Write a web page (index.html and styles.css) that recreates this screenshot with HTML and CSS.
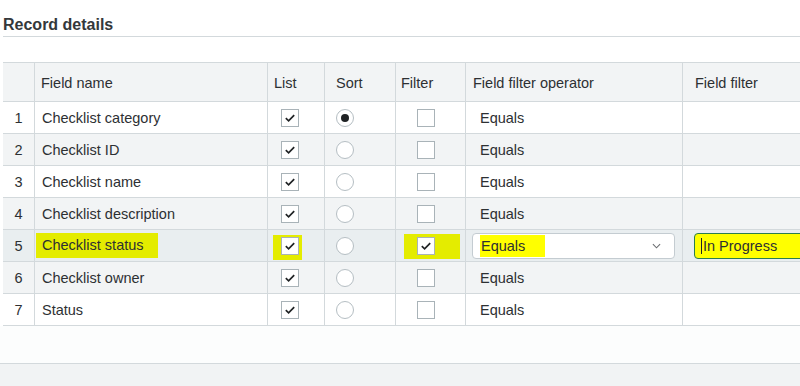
FILE: index.html
```html
<!DOCTYPE html>
<html lang="en">
<head>
    <meta charset="UTF-8">
    <meta name="viewport" content="width=device-width, initial-scale=1.0">
    <title>Record details</title>
    <link rel="stylesheet" href="styles.css">
</head>
<body>
    <div class="page">
        <h2 class="section-title">Record details</h2>

        <div class="table-wrap">
        <table class="fields">
            <colgroup>
                <col class="w-num">
                <col class="w-name">
                <col class="w-list">
                <col class="w-sort">
                <col class="w-filter">
                <col class="w-op">
                <col class="w-value">
            </colgroup>
            <thead>
                <tr>
                    <th></th>
                    <th class="h-name">Field name</th>
                    <th class="h-list">List</th>
                    <th class="h-sort">Sort</th>
                    <th class="h-filter">Filter</th>
                    <th class="h-op">Field filter operator</th>
                    <th class="h-value">Field filter</th>
                </tr>
            </thead>
            <tbody>
                <tr>
                    <td class="num"><div class="cell">1</div></td>
                    <td><div class="cell name">Checklist category</div></td>
                    <td><div class="cell c-list"><span class="box"><svg viewBox="0 0 16 16"><path d="M3.8 8.2 L6.6 10.8 L12.2 5.2"/></svg></span></div></td>
                    <td><div class="cell c-sort"><span class="radio on"></span></div></td>
                    <td><div class="cell c-filter"><span class="box"></span></div></td>
                    <td><div class="cell op">Equals</div></td>
                    <td><div class="cell"></div></td>
                </tr>
                <tr>
                    <td class="num"><div class="cell">2</div></td>
                    <td><div class="cell name">Checklist ID</div></td>
                    <td><div class="cell c-list"><span class="box"><svg viewBox="0 0 16 16"><path d="M3.8 8.2 L6.6 10.8 L12.2 5.2"/></svg></span></div></td>
                    <td><div class="cell c-sort"><span class="radio"></span></div></td>
                    <td><div class="cell c-filter"><span class="box"></span></div></td>
                    <td><div class="cell op">Equals</div></td>
                    <td><div class="cell"></div></td>
                </tr>
                <tr>
                    <td class="num"><div class="cell">3</div></td>
                    <td><div class="cell name">Checklist name</div></td>
                    <td><div class="cell c-list"><span class="box"><svg viewBox="0 0 16 16"><path d="M3.8 8.2 L6.6 10.8 L12.2 5.2"/></svg></span></div></td>
                    <td><div class="cell c-sort"><span class="radio"></span></div></td>
                    <td><div class="cell c-filter"><span class="box"></span></div></td>
                    <td><div class="cell op">Equals</div></td>
                    <td><div class="cell"></div></td>
                </tr>
                <tr>
                    <td class="num"><div class="cell">4</div></td>
                    <td><div class="cell name">Checklist description</div></td>
                    <td><div class="cell c-list"><span class="box"><svg viewBox="0 0 16 16"><path d="M3.8 8.2 L6.6 10.8 L12.2 5.2"/></svg></span></div></td>
                    <td><div class="cell c-sort"><span class="radio"></span></div></td>
                    <td><div class="cell c-filter"><span class="box"></span></div></td>
                    <td><div class="cell op">Equals</div></td>
                    <td><div class="cell"></div></td>
                </tr>
                <tr class="selected">
                    <td class="num"><div class="cell">5</div></td>
                    <td><div class="cell name"><span class="mark-text">Checklist status</span></div></td>
                    <td><div class="cell c-list"><span class="marker list-mark"><span class="box"><svg viewBox="0 0 16 16"><path d="M3.8 8.2 L6.6 10.8 L12.2 5.2"/></svg></span></span></div></td>
                    <td><div class="cell c-sort"><span class="radio"></span></div></td>
                    <td><div class="cell c-filter"><span class="marker filter-mark"><span class="box"><svg viewBox="0 0 16 16"><path d="M3.8 8.2 L6.6 10.8 L12.2 5.2"/></svg></span></span></div></td>
                    <td>
                        <div class="cell">
                            <div class="select">
                                <span class="hl">Equals</span>
                                <svg class="chevron" viewBox="0 0 10 6"><path d="M1 1 L5 5 L9 1"/></svg>
                            </div>
                        </div>
                    </td>
                    <td>
                        <div class="cell">
                            <div class="input"><span class="caret"></span>In Progress</div>
                        </div>
                    </td>
                </tr>
                <tr>
                    <td class="num"><div class="cell">6</div></td>
                    <td><div class="cell name">Checklist owner</div></td>
                    <td><div class="cell c-list"><span class="box"><svg viewBox="0 0 16 16"><path d="M3.8 8.2 L6.6 10.8 L12.2 5.2"/></svg></span></div></td>
                    <td><div class="cell c-sort"><span class="radio"></span></div></td>
                    <td><div class="cell c-filter"><span class="box"></span></div></td>
                    <td><div class="cell op">Equals</div></td>
                    <td><div class="cell"></div></td>
                </tr>
                <tr>
                    <td class="num"><div class="cell">7</div></td>
                    <td><div class="cell name">Status</div></td>
                    <td><div class="cell c-list"><span class="box"><svg viewBox="0 0 16 16"><path d="M3.8 8.2 L6.6 10.8 L12.2 5.2"/></svg></span></div></td>
                    <td><div class="cell c-sort"><span class="radio"></span></div></td>
                    <td><div class="cell c-filter"><span class="box"></span></div></td>
                    <td><div class="cell op">Equals</div></td>
                    <td><div class="cell"></div></td>
                </tr>
            </tbody>
        </table>
        </div>
    </div>

    <div class="footer-bar"></div>
</body>
</html>
```

FILE: styles.css
```css
:root {
    --text-color: #2d3033;
    --line-color: #d3d9dc;
    --head-bg: #f2f4f5;
    --stripe-bg: #f2f4f5;
    --selected-bg: #e9eef0;
    --marker: #e4ec00;
    --highlight: #ffff00;
}

body {
    margin: 0;
    font-family: "Liberation Sans", Arial, sans-serif;
    font-size: 14.5px;
    color: var(--text-color);
    background: #fcfdfd;
    overflow: hidden;
}

.page {
    padding-left: 3px;
    background: white;
}

.section-title {
    margin: 0;
    padding: 15px 0 1px;
    font-size: 16px;
    line-height: 20px;
    font-weight: bold;
    color: #34383b;
    border-bottom: 1px solid var(--line-color);
}

.table-wrap {
    margin-top: 25px;
    overflow: hidden;
}

.fields {
    width: 880px;
    table-layout: fixed;
    border-collapse: separate;
    border-spacing: 0;
    border-top: 1px solid var(--line-color);
}

.w-num { width: 32px; }
.w-name { width: 233px; }
.w-list { width: 57px; }
.w-sort { width: 71px; }
.w-filter { width: 70px; }
.w-op { width: 217px; }
.w-value { width: 200px; }

th, td {
    padding: 0;
    border-bottom: 1px solid var(--line-color);
    border-right: 1px solid var(--line-color);
    box-sizing: border-box;
}

th {
    height: 39px;
    padding-top: 1px;
    background: var(--head-bg);
    font-weight: normal;
    text-align: left;
    white-space: nowrap;
}

.h-name { padding-left: 6px; }
.h-list { padding-left: 6px; }
.h-sort { padding-left: 11px; }
.h-filter { padding-left: 5px; }
.h-op { padding-left: 7px; }
.h-value { padding-left: 12px; }

tbody tr:nth-child(even) td {
    background: var(--stripe-bg);
}

tbody tr.selected td {
    background: var(--selected-bg);
}

.cell {
    height: 31px;
    display: flex;
    align-items: center;
    white-space: nowrap;
}

.num .cell {
    justify-content: center;
}

.name { padding-left: 7px; }
.c-list { padding-left: 13px; }
.c-sort { padding-left: 11px; }
.c-filter { padding-left: 21px; }
.op { padding-left: 14px; }

.box {
    width: 18px;
    height: 18px;
    box-sizing: border-box;
    border: 1px solid #a9b3b8;
    background: white;
    display: flex;
}

.box svg {
    width: 16px;
    height: 16px;
}

.box path {
    fill: none;
    stroke: #1f2224;
    stroke-width: 1.7;
}

.radio {
    width: 18px;
    height: 18px;
    box-sizing: border-box;
    border: 1px solid #b5bec3;
    border-radius: 50%;
    background: white;
    display: flex;
    align-items: center;
    justify-content: center;
}

.radio.on::after {
    content: "";
    width: 8px;
    height: 8px;
    border-radius: 50%;
    background: #1f2224;
}

.mark-text {
    background: var(--marker);
    margin-left: -6px;
    padding: 4px 14px 4px 6px;
    line-height: 17px;
}

.marker {
    display: flex;
    background: var(--marker);
}

.list-mark {
    padding: 2px 3px 5px 8px;
    margin: -2px -3px -5px -8px;
}

.filter-mark {
    padding: 3px 25px 4px 13px;
    margin: -3px -25px -4px -13px;
}

.select {
    margin-left: 6px;
    width: 203px;
    height: 26px;
    box-sizing: border-box;
    border: 1px solid #c4ccd1;
    border-radius: 4px;
    background: white;
    display: flex;
    align-items: center;
    justify-content: space-between;
    padding: 0 13px 0 7px;
}

.hl {
    background: var(--highlight);
    padding: 3px 20px 3px 1px;
    line-height: 16px;
}

.chevron {
    width: 9px;
    height: 6px;
}

.chevron path {
    fill: none;
    stroke: #6a6d70;
    stroke-width: 1.2;
}

.input {
    margin-left: 11px;
    width: 180px;
    height: 26px;
    box-sizing: border-box;
    border: 1px solid #2b7d4f;
    border-radius: 4px;
    background: var(--highlight);
    display: flex;
    align-items: center;
    padding-left: 6px;
}

.caret {
    width: 1px;
    height: 16px;
    background: #1f2224;
    margin-right: 1px;
}

.footer-bar {
    margin-top: 37px;
    height: 30px;
    border-top: 1px solid var(--line-color);
    background: #f1f3f4;
}
```
